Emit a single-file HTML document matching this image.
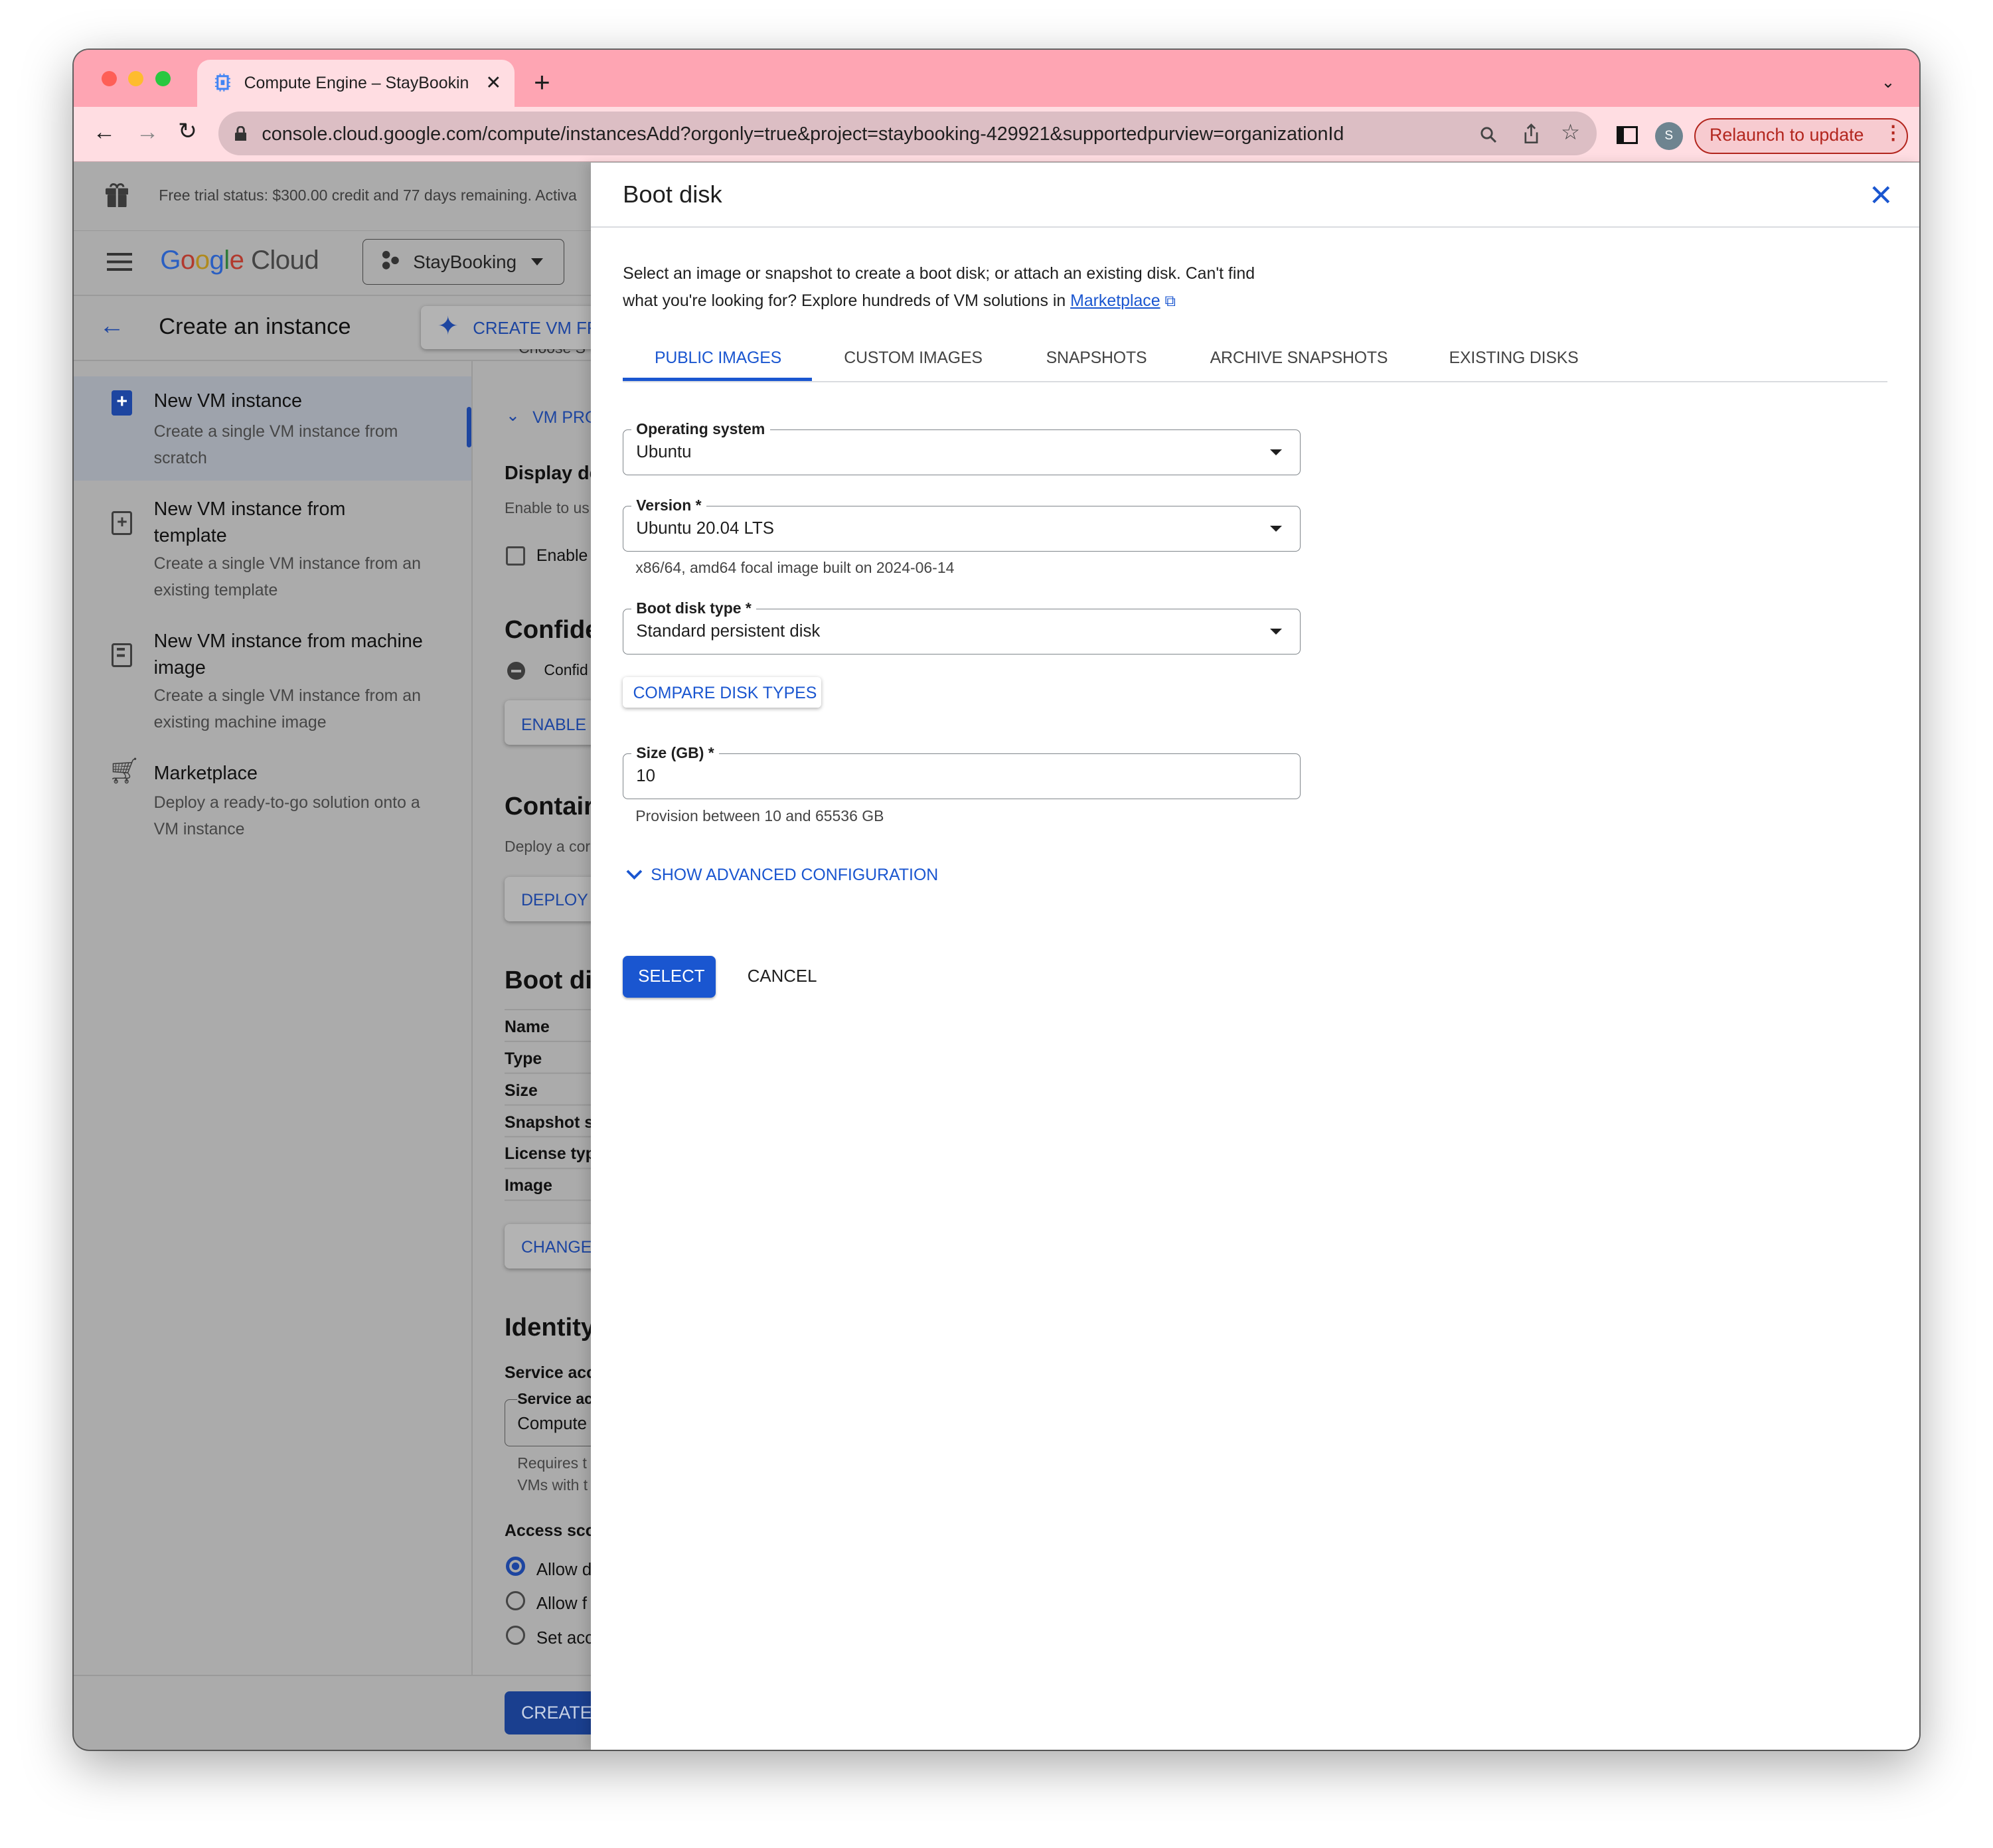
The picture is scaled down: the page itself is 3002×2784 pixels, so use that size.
<!DOCTYPE html>
<html><head><meta charset="utf-8">
<style>
html,body{margin:0;padding:0;background:#fff;}
body{width:3002px;height:2784px;overflow:hidden;font-family:"Liberation Sans",Arial,sans-serif;}
#w{zoom:1.91454;width:1568px;height:1454px;position:relative;background:#fff;}
.a{position:absolute;white-space:nowrap;}
#win{position:absolute;left:58px;top:39px;width:1452px;height:1338px;border-radius:12px;overflow:hidden;box-shadow:0 12px 40px rgba(0,0,0,.35),0 0 0 1px rgba(0,0,0,.6);background:#ababab;}
.sub{color:#474747;font-size:13px;line-height:21px}
.fld{position:absolute;left:490px;width:532px;height:35px;border:1px solid #80868b;border-radius:4px;}
.fld .v{position:absolute;left:10px;top:10px;font-size:13.5px;color:#1f1f1f}
.fld .l{position:absolute;left:6px;top:-8px;background:#fff;padding:0 4px;font-size:12px;font-weight:bold;color:#1f1f1f}
.fld .t{position:absolute;right:14px;top:15px;width:0;height:0;border-left:5px solid transparent;border-right:5px solid transparent;border-top:5px solid #1f1f1f}
.tab{position:absolute;top:274px;font-size:13px;color:#444;letter-spacing:-.1px}
</style></head><body><div id="w">
<div id="win">
 <div class="a" style="left:0;top:0;width:1452px;height:45px;background:#fea5b3"></div>
 <div class="a" style="left:22px;top:17px;width:12px;height:12px;border-radius:6px;background:#fe5f57"></div>
 <div class="a" style="left:43px;top:17px;width:12px;height:12px;border-radius:6px;background:#febc2e"></div>
 <div class="a" style="left:64px;top:17px;width:12px;height:12px;border-radius:6px;background:#28c840"></div>
 <div class="a" style="left:97px;top:8px;width:250px;height:40px;background:#ffdde2;border-radius:10px 10px 0 0"></div>
 <svg class="a" style="left:110px;top:18px" width="14" height="16" viewBox="0 0 14 16"><rect x="3" y="3" width="8" height="10" fill="none" stroke="#4285f4" stroke-width="1.6"/><rect x="5.5" y="6" width="3" height="4" fill="#4285f4"/><path d="M1 5h2M1 8h2M1 11h2M11 5h2M11 8h2M11 11h2M5 1v2M8 1v2M5 13v2M8 13v2" stroke="#4285f4"/></svg>
 <div class="a" style="left:134px;top:19px;font-size:13px;color:#1f1f1f;width:178px;overflow:hidden">Compute Engine – StayBookin</div>
 <div class="a" style="left:324px;top:17px;font-size:15px;color:#1f1f1f">✕</div>
 <div class="a" style="left:362px;top:13px;font-size:22px;color:#1f1f1f">+</div>
 <div class="a" style="left:1422px;top:18px;font-size:13px;color:#1f1f1f">⌄</div>
 <div class="a" style="left:0;top:45px;width:1452px;height:43px;background:#ffdde2;border-bottom:1px solid #c9a8ad"></div>
 <div class="a" style="left:15px;top:55px;font-size:18px;color:#1f1f1f">←</div>
 <div class="a" style="left:49px;top:55px;font-size:18px;color:#888">→</div>
 <div class="a" style="left:82px;top:54px;font-size:18px;color:#1f1f1f">↻</div>
 <div class="a" style="left:114px;top:49px;width:1084px;height:34px;border-radius:17px;background:#dcbec4"></div>
 <svg class="a" style="left:127px;top:60px" width="9" height="12"><rect x="0" y="5" width="9" height="7" rx="1" fill="#333"/><path d="M2 5V3a2.5 2.5 0 0 1 5 0v2" fill="none" stroke="#333" stroke-width="1.5"/></svg>
 <div class="a" style="left:148px;top:58px;font-size:15px;color:#1f1f1f">console.cloud.google.com/compute/instancesAdd?orgonly=true&amp;project=staybooking-429921&amp;supportedpurview=organizationId</div>
 <svg class="a" style="left:1106px;top:60px" width="14" height="14"><circle cx="5.5" cy="5.5" r="4" fill="none" stroke="#444" stroke-width="1.5"/><path d="M8.5 8.5l4 4" stroke="#444" stroke-width="1.6"/></svg>
 <svg class="a" style="left:1140px;top:58px" width="13" height="17"><path d="M2 7v8h9V7M6.5 1v9M3.5 4l3-3 3 3" fill="none" stroke="#444" stroke-width="1.4"/></svg>
 <div class="a" style="left:1170px;top:55px;font-size:17px;color:#444">☆</div>
 <div class="a" style="left:1214px;top:60px;width:9px;height:11px;border:2px solid #111;border-left-width:6px;background:#ffdde2"></div>
 <div class="a" style="left:1244px;top:57px;width:22px;height:22px;border-radius:11px;background:#6e8490;color:#fff;font-size:10px;text-align:center;line-height:22px">S</div>
 <div class="a" style="left:1275px;top:54px;width:166px;height:26px;border:1.5px solid #b3261e;border-radius:15px;background:#f7cbd0"></div>
 <div class="a" style="left:1287px;top:59px;font-size:14px;color:#b3261e">Relaunch to update</div>
 <div class="a" style="left:1424px;top:56px;font-size:15px;color:#b3261e;font-weight:bold">⋮</div>

 <div class="a" style="left:0;top:142px;width:407px;height:1px;background:#9a9a9a"></div>
 <div class="a" style="left:0;top:193px;width:407px;height:1px;background:#9a9a9a"></div>
 <div class="a" style="left:350px;top:230px;font-size:12px;color:#333;height:14px;overflow:hidden;line-height:10px">Choose  S</div>
 <div class="a" style="left:0;top:244px;width:407px;height:1px;background:#9a9a9a"></div>
 <svg class="a" style="left:25px;top:104px" width="18" height="20"><rect x="0" y="5" width="18" height="5" rx="1" fill="#3a3a3a"/><rect x="1.5" y="10" width="15" height="10" rx="1" fill="#3a3a3a"/><path d="M9 5v15" stroke="#ababab" stroke-width="1.6"/><path d="M4 4c0-3 5-3 5 1c0-4 5-4 5-1" fill="none" stroke="#3a3a3a" stroke-width="1.6"/></svg>
 <div class="a" style="left:67px;top:108px;font-size:12px;color:#3c3c3c">Free trial status: $300.00 credit and 77 days remaining. Activa</div>
 <div class="a" style="left:26px;top:160px;width:20px;height:2px;background:#333;box-shadow:0 6px 0 #333,0 12px 0 #333"></div>
 <div class="a" style="left:68px;top:154px;font-size:21px;letter-spacing:-.3px"><span style="color:#2a5fc2">G</span><span style="color:#b23a2e">o</span><span style="color:#b08a1e">o</span><span style="color:#2a5fc2">g</span><span style="color:#2f7a3a">l</span><span style="color:#b23a2e">e</span> <span style="color:#444">Cloud</span></div>
 <div class="a" style="left:227px;top:149px;width:158px;height:35px;border:1px solid #444;border-radius:4px"></div>
 <svg class="a" style="left:242px;top:158px" width="16" height="16"><circle cx="4" cy="3.5" r="3" fill="#333"/><circle cx="4" cy="12" r="3" fill="#333"/><circle cx="11" cy="8" r="3" fill="#333"/></svg>
 <div class="a" style="left:267px;top:159px;font-size:14.5px;color:#222">StayBooking</div>
 <div class="a" style="left:360px;top:164px;border-left:5px solid transparent;border-right:5px solid transparent;border-top:6px solid #222"></div>
 <div class="a" style="left:20px;top:206px;font-size:20px;color:#1d45a0">←</div>
 <div class="a" style="left:67px;top:208px;font-size:18px;color:#111">Create an instance</div>
 <div class="a" style="left:273px;top:202px;width:150px;height:34px;background:#b3b3b3;border-radius:4px;box-shadow:0 1px 3px rgba(0,0,0,.3)"></div>
 <div class="a" style="left:286px;top:206px;font-size:20px;color:#1d45a0">✦</div>
 <div class="a" style="left:314px;top:212px;font-size:13.5px;color:#1d45a0">CREATE VM FR</div>

 <div class="a" style="left:313px;top:245px;width:1px;height:1035px;background:#9a9a9a"></div>
 <div class="a" style="left:0;top:257px;width:313px;height:82px;background:#9ea3ac"></div>
 <div class="a" style="left:309px;top:281px;width:4px;height:32px;background:#1d45a0;border-radius:2px"></div>
 <div class="a" style="left:30px;top:268px;width:16px;height:20px;background:#1d45a0;border-radius:2px;color:#fff;font-size:15px;font-weight:bold;text-align:center;line-height:18px">+</div>
 <div class="a" style="left:63px;top:268px;font-size:15px;color:#111">New VM instance</div>
 <div class="a sub" style="left:63px;top:290px;color:#464646">Create a single VM instance from<br>scratch</div>
 <div class="a" style="left:30px;top:363px;width:13px;height:16px;border:2px solid #3d3d3d;border-radius:2px;color:#3d3d3d;font-size:14px;font-weight:bold;text-align:center;line-height:14px">+</div>
 <div class="a" style="left:63px;top:351px;font-size:15px;color:#111;line-height:21px">New VM instance from<br>template</div>
 <div class="a sub" style="left:63px;top:394px;color:#464646">Create a single VM instance from an<br>existing template</div>
 <div class="a" style="left:30px;top:467px;width:13px;height:16px;border:2px solid #3d3d3d;border-radius:2px"></div>
 <div class="a" style="left:34px;top:471px;width:6px;height:2px;background:#3d3d3d;box-shadow:0 5px 0 #3d3d3d"></div>
 <div class="a" style="left:63px;top:455px;font-size:15px;color:#111;line-height:21px">New VM instance from machine<br>image</div>
 <div class="a sub" style="left:63px;top:498px;color:#464646">Create a single VM instance from an<br>existing machine image</div>
 <div class="a" style="left:27px;top:556px;font-size:20px;color:#3d3d3d">🛒︎</div>
 <div class="a" style="left:63px;top:561px;font-size:15px;color:#111">Marketplace</div>
 <div class="a sub" style="left:63px;top:582px;color:#464646">Deploy a ready-to-go solution onto a<br>VM instance</div>

 <div class="a" style="left:340px;top:280px;font-size:13px;color:#1d45a0">⌄</div>
 <div class="a" style="left:361px;top:282px;font-size:13px;color:#1d45a0">VM PRO</div>
 <div class="a" style="left:339px;top:325px;font-size:15px;font-weight:bold;color:#111">Display de</div>
 <div class="a" style="left:339px;top:354px;font-size:12px;color:#444">Enable to us</div>
 <div class="a" style="left:340px;top:391px;width:12px;height:12px;border:2px solid #444;border-radius:2px"></div>
 <div class="a" style="left:364px;top:391px;font-size:13px;color:#111">Enable</div>
 <div class="a" style="left:339px;top:445px;font-size:20px;font-weight:bold;color:#111">Confide</div>
 <div class="a" style="left:341px;top:482px;width:14px;height:14px;border-radius:7px;background:#3d3d3d"></div>
 <div class="a" style="left:344px;top:488px;width:8px;height:2px;background:#ababab"></div>
 <div class="a" style="left:370px;top:481px;font-size:12px;color:#111">Confid</div>
 <div class="a" style="left:339px;top:512px;width:80px;height:35px;background:#b3b3b3;border-radius:4px;box-shadow:0 1px 3px rgba(0,0,0,.3)"></div>
 <div class="a" style="left:352px;top:524px;font-size:13px;color:#1d45a0">ENABLE</div>
 <div class="a" style="left:339px;top:584px;font-size:20px;font-weight:bold;color:#111">Contair</div>
 <div class="a" style="left:339px;top:620px;font-size:12px;color:#444">Deploy a cor</div>
 <div class="a" style="left:339px;top:651px;width:80px;height:35px;background:#b3b3b3;border-radius:4px;box-shadow:0 1px 3px rgba(0,0,0,.3)"></div>
 <div class="a" style="left:352px;top:662px;font-size:13px;color:#1d45a0">DEPLOY C</div>
 <div class="a" style="left:339px;top:721px;font-size:20px;font-weight:bold;color:#111">Boot di</div>
 <div class="a" style="left:339px;top:755px;width:70px;height:1px;background:#999;box-shadow:0 25px 0 #999,0 50px 0 #999,0 75px 0 #999,0 100px 0 #999,0 125px 0 #999,0 150px 0 #999"></div>
 <div class="a" style="left:339px;top:757px;font-size:13px;font-weight:bold;color:#111;line-height:25px;white-space:pre">Name
Type
Size
Snapshot s
License typ
Image</div>
 <div class="a" style="left:339px;top:924px;width:80px;height:35px;background:#b3b3b3;border-radius:4px;box-shadow:0 1px 3px rgba(0,0,0,.3)"></div>
 <div class="a" style="left:352px;top:935px;font-size:13px;color:#1d45a0">CHANGE</div>
 <div class="a" style="left:339px;top:994px;font-size:20px;font-weight:bold;color:#111">Identity</div>
 <div class="a" style="left:339px;top:1034px;font-size:13px;font-weight:bold;color:#111">Service acc</div>
 <div class="a" style="left:339px;top:1062px;width:80px;height:36px;border:1px solid #555;border-radius:4px"></div>
 <div class="a" style="left:349px;top:1055px;font-size:12px;font-weight:bold;color:#111;background:#ababab">Service ac</div>
 <div class="a" style="left:349px;top:1074px;font-size:13.5px;color:#111">Compute</div>
 <div class="a" style="left:349px;top:1104px;font-size:12px;color:#444;line-height:17px">Requires t<br>VMs with t</div>
 <div class="a" style="left:339px;top:1158px;font-size:13px;font-weight:bold;color:#111">Access sco</div>
 <div class="a" style="left:340px;top:1186px;width:10px;height:10px;border:3px solid #1d45a0;border-radius:8px;box-shadow:inset 0 0 0 2px #ababab;background:#1d45a0"></div>
 <div class="a" style="left:340px;top:1213px;width:12px;height:12px;border:2px solid #444;border-radius:8px"></div>
 <div class="a" style="left:340px;top:1240px;width:12px;height:12px;border:2px solid #444;border-radius:8px"></div>
 <div class="a" style="left:364px;top:1183px;font-size:13.5px;color:#111;line-height:27px;white-space:pre">Allow d
Allow f
Set acc</div>
 <div class="a" style="left:0;top:1279px;width:407px;height:1px;background:#9a9a9a"></div>
 <div class="a" style="left:339px;top:1292px;width:80px;height:34px;background:#1a3f8f;border-radius:4px"></div>
 <div class="a" style="left:352px;top:1301px;font-size:14px;color:#c8d2e6">CREATE</div>

 <div class="a" style="left:407px;top:89px;width:1045px;height:1249px;background:#fff;box-shadow:-4px 0 8px rgba(0,0,0,.12)"></div>
</div>
<div class="a" style="left:490px;top:142px;font-size:19px;color:#1f1f1f">Boot disk</div>
<svg class="a" style="left:1472px;top:145px" width="16" height="16"><path d="M2 2l12 12M14 2L2 14" stroke="#1a56d0" stroke-width="2.2"/></svg>
<div class="a" style="left:465px;top:178px;width:1045px;height:1px;background:#dadce0"></div>
<div class="a" style="left:490px;top:205px;font-size:13px;color:#1f1f1f;line-height:21px">Select an image or snapshot to create a boot disk; or attach an existing disk. Can't find<br>what you're looking for? Explore hundreds of VM solutions in <span style="color:#1a56d0;text-decoration:underline">Marketplace</span> <span style="color:#1a56d0;font-size:12px">⧉</span></div>
<div class="tab" style="left:515px;color:#1a56d0">PUBLIC IMAGES</div>
<div class="tab" style="left:664px">CUSTOM IMAGES</div>
<div class="tab" style="left:823px">SNAPSHOTS</div>
<div class="tab" style="left:952px">ARCHIVE SNAPSHOTS</div>
<div class="tab" style="left:1140px">EXISTING DISKS</div>
<div class="a" style="left:490px;top:300px;width:995px;height:1px;background:#dadce0"></div>
<div class="a" style="left:490px;top:297px;width:149px;height:3px;background:#1a56d0"></div>

<div class="fld" style="top:338px"><div class="l">Operating system</div><div class="v">Ubuntu</div><div class="t"></div></div>
<div class="fld" style="top:398px"><div class="l">Version *</div><div class="v">Ubuntu 20.04 LTS</div><div class="t"></div></div>
<div class="a" style="left:500px;top:440px;font-size:12px;color:#444">x86/64, amd64 focal image built on 2024-06-14</div>
<div class="fld" style="top:479px"><div class="l">Boot disk type *</div><div class="v">Standard persistent disk</div><div class="t"></div></div>
<div class="a" style="left:490px;top:533px;width:156px;height:24px;background:#fff;border-radius:3px;box-shadow:0 1px 3px rgba(0,0,0,.3)"></div>
<div class="a" style="left:498px;top:538px;font-size:13px;color:#1a56d0">COMPARE DISK TYPES</div>
<div class="fld" style="top:593px"><div class="l">Size (GB) *</div><div class="v">10</div></div>
<div class="a" style="left:500px;top:635px;font-size:12px;color:#444">Provision between 10 and 65536 GB</div>
<svg class="a" style="left:492px;top:683px" width="14" height="10"><path d="M1.5 2l5.5 5.5L12.5 2" fill="none" stroke="#1a56d0" stroke-width="2"/></svg>
<div class="a" style="left:512px;top:681px;font-size:13px;color:#1a56d0">SHOW ADVANCED CONFIGURATION</div>
<div class="a" style="left:490px;top:752px;width:73px;height:33px;background:#1a56d0;border-radius:4px;box-shadow:0 1px 2px rgba(0,0,0,.3)"></div>
<div class="a" style="left:502px;top:761px;font-size:13.5px;color:#fff">SELECT</div>
<div class="a" style="left:588px;top:761px;font-size:13.5px;color:#1f1f1f">CANCEL</div>
</div></body></html>
